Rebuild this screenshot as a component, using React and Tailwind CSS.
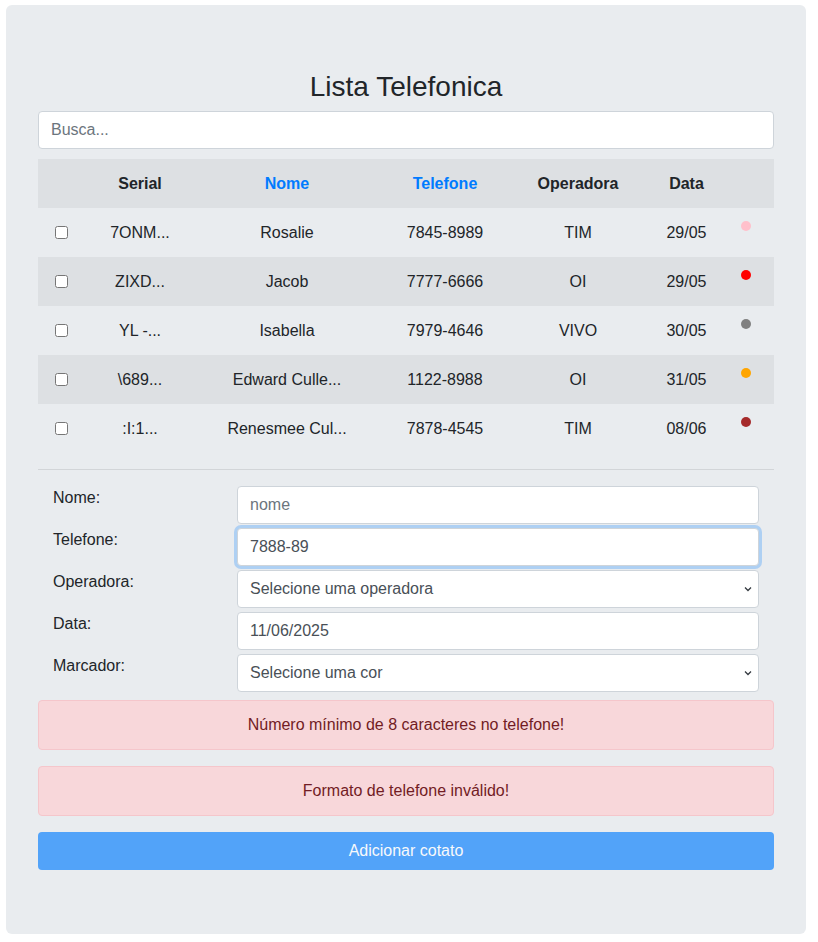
import React from "react";

const rows = [
  { serial: "7ONM...", nome: "Rosalie", tel: "7845-8989", op: "TIM", data: "29/05", cor: "bg-[#ffc0cb]" },
  { serial: "ZIXD...", nome: "Jacob", tel: "7777-6666", op: "OI", data: "29/05", cor: "bg-[#ff0000]" },
  { serial: "YL -...", nome: "Isabella", tel: "7979-4646", op: "VIVO", data: "30/05", cor: "bg-[#808080]" },
  { serial: "\\689...", nome: "Edward Culle...", tel: "1122-8988", op: "OI", data: "31/05", cor: "bg-[#ffa500]" },
  { serial: ":I:1...", nome: "Renesmee Cul...", tel: "7878-4545", op: "TIM", data: "08/06", cor: "bg-[#a52a2a]" },
];

function Chevron() {
  return (
    <svg className="absolute right-[7px] top-1/2 -translate-y-1/2 pointer-events-none" width="8" height="6" viewBox="0 0 8 6">
      <polyline points="1,1.5 4,4.5 7,1.5" fill="none" stroke="#343a40" strokeWidth="1.3" />
    </svg>
  );
}

function FormRow({ label, children }) {
  return (
    <div className="flex h-[42px]">
      <label className="w-[184px] shrink-0 pl-[15px] leading-6 text-[#212529]">{label}</label>
      <div className="flex-1 px-[15px]">{children}</div>
    </div>
  );
}

const inputCls =
  "block w-full h-[38px] rounded-[4px] border border-[#ced4da] bg-white px-3 text-base text-[#495057] placeholder:text-[#6c757d] outline-none";

export default function App() {
  return (
    <div className="min-h-[942px] bg-white pt-[5px] pl-[6px]" style={{ fontFamily: '"Liberation Sans", Arial, sans-serif' }}>
      <div className="w-[800px] rounded-[6px] bg-[#e9ecef] px-8 py-16 text-base text-[#212529]">
        <h3 className="mt-[1px] mb-[7px] text-center text-[28px] leading-[1.2] font-medium">Lista Telefonica</h3>
        <input className={inputCls + " mb-[10px]"} placeholder="Busca..." />

        <table className="w-full table-fixed border-collapse text-center">
          <colgroup>
            <col className="w-[46px]" />
            <col className="w-[112px]" />
            <col className="w-[182px]" />
            <col className="w-[134px]" />
            <col className="w-[132px]" />
            <col className="w-[85px]" />
            <col className="w-[45px]" />
          </colgroup>
          <thead>
            <tr className="h-[49px] bg-[#dde0e3] font-bold">
              <th></th>
              <th className="pt-[2px]">Serial</th>
              <th className="pt-[2px] text-[#007bff]">Nome</th>
              <th className="pt-[2px] text-[#007bff]">Telefone</th>
              <th className="pt-[2px]">Operadora</th>
              <th className="pt-[2px]">Data</th>
              <th></th>
            </tr>
          </thead>
          <tbody>
            {rows.map((r, i) => (
              <tr key={i} className={"h-[49px] " + (i % 2 === 1 ? "bg-[#dde0e3]" : "")}>
                <td className="align-middle">
                  <input type="checkbox" className="m-0 h-[13px] w-[13px] align-middle" />
                </td>
                <td className="pt-[2px] whitespace-nowrap">{r.serial}</td>
                <td className="pt-[2px] whitespace-nowrap">{r.nome}</td>
                <td className="pt-[2px]">{r.tel}</td>
                <td className="pt-[2px]">{r.op}</td>
                <td className="pt-[2px]">{r.data}</td>
                <td className="pl-3 pt-[13px] text-left align-top">
                  <span className={"block h-[10px] w-[10px] rounded-full " + r.cor}></span>
                </td>
              </tr>
            ))}
          </tbody>
        </table>

        <hr className="my-4 border-0 border-t border-[#d2d5d8]" />

        <div>
          <FormRow label="Nome:">
            <input className={inputCls} placeholder="nome" />
          </FormRow>
          <FormRow label="Telefone:">
            <input
              className={inputCls + " border-[#80bdff] shadow-[0_0_0_3px_rgba(0,123,255,0.25)]"}
              defaultValue="7888-89"
            />
          </FormRow>
          <FormRow label="Operadora:">
            <div className="relative">
              <select className={inputCls + " appearance-none pr-8"} defaultValue="">
                <option value="">Selecione uma operadora</option>
              </select>
              <Chevron />
            </div>
          </FormRow>
          <FormRow label="Data:">
            <input className={inputCls} defaultValue="11/06/2025" />
          </FormRow>
          <FormRow label="Marcador:">
            <div className="relative">
              <select className={inputCls + " appearance-none pr-8"} defaultValue="">
                <option value="">Selecione uma cor</option>
              </select>
              <Chevron />
            </div>
          </FormRow>
        </div>

        <div className="mt-1 mb-4 rounded-[4px] border border-[#f5c6cb] bg-[#f8d7da] px-5 py-3 text-center leading-6 text-[#721c24]">
          Número mínimo de 8 caracteres no telefone!
        </div>
        <div className="mb-4 rounded-[4px] border border-[#f5c6cb] bg-[#f8d7da] px-5 py-3 text-center leading-6 text-[#721c24]">
          Formato de telefone inválido!
        </div>
        <button className="block h-[38px] w-full rounded-[4px] bg-[#52a3f9] text-center text-base text-[#f8f9fb]">
          Adicionar cotato
        </button>
      </div>
    </div>
  );
}
